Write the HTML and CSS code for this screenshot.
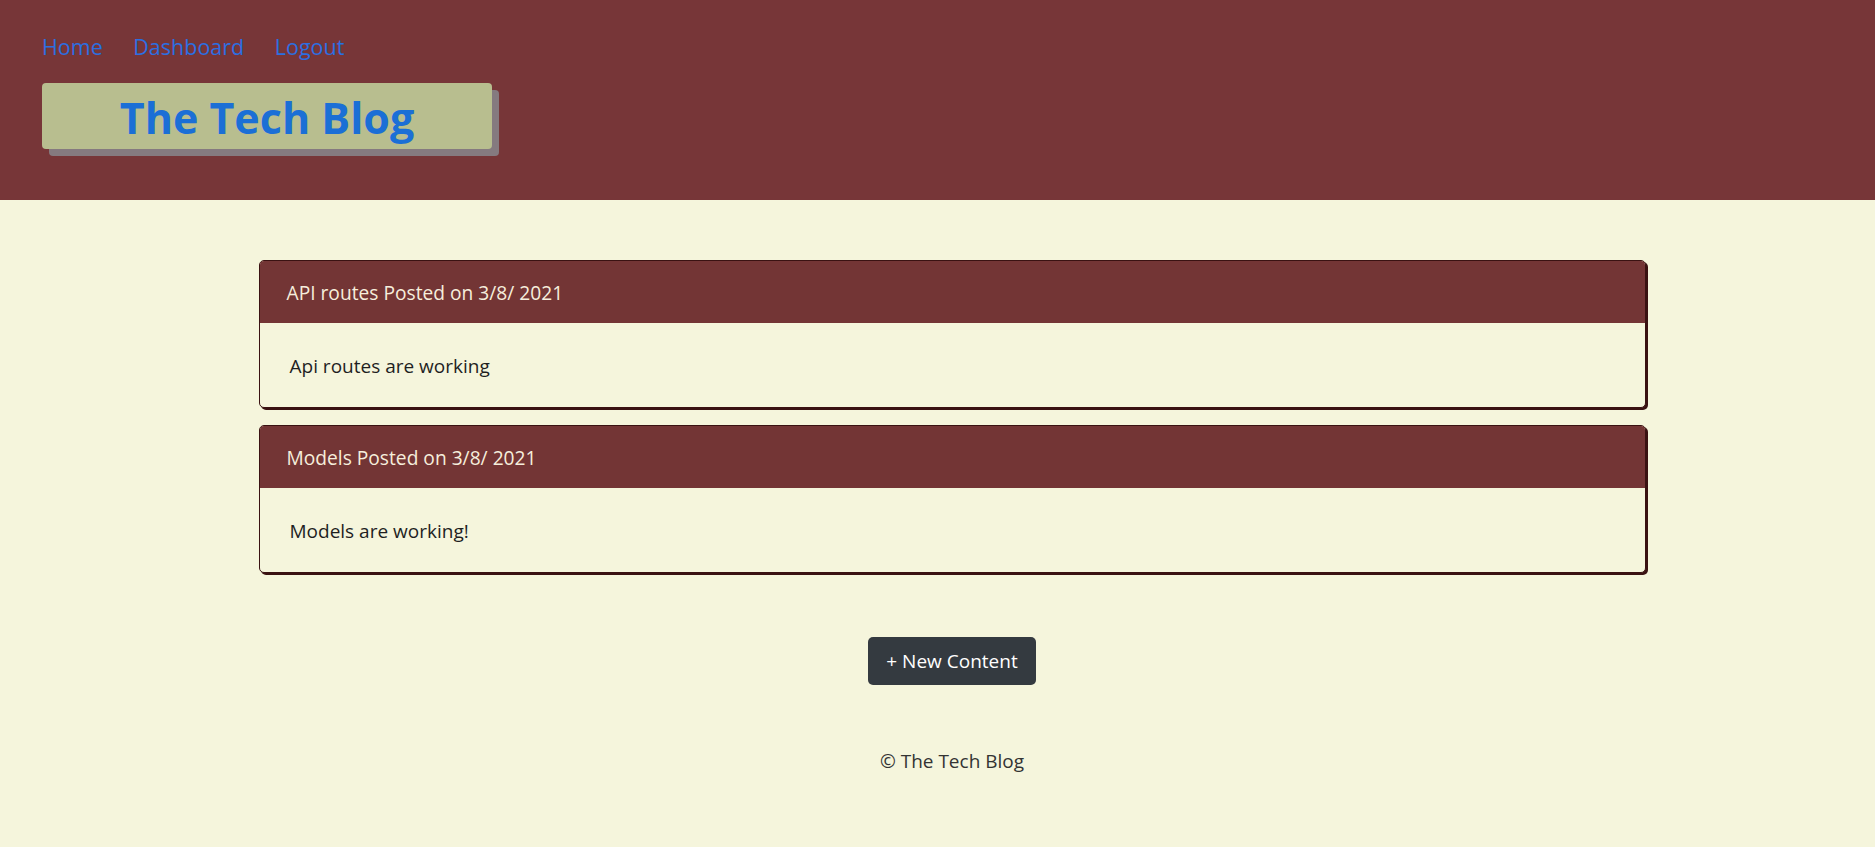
FILE: index.html
```html
<!DOCTYPE html>
<html lang="en">
<head>
<meta charset="utf-8">
<title>The Tech Blog</title>
<link rel="stylesheet" href="styles.css">
</head>
<body>
<header class="site-header">
  <nav class="nav">
    <a class="nav-link" href="#">Home</a>
    <a class="nav-link" href="#">Dashboard</a>
    <a class="nav-link" href="#">Logout</a>
  </nav>
  <div class="brand"><h1 class="brand-title">The Tech Blog</h1></div>
</header>
<main class="main">
  <div class="posts">
    <article class="card">
      <div class="card-header">API routes Posted on 3/8/ 2021</div>
      <div class="card-body">Api routes are working</div>
    </article>
    <article class="card">
      <div class="card-header">Models Posted on 3/8/ 2021</div>
      <div class="card-body">Models are working!</div>
    </article>
  </div>
  <div class="actions"><a class="btn" href="#">+ New Content</a></div>
  <footer class="footer">© The Tech Blog</footer>
</main>
</body>
</html>
```
FILE: styles.css
```css
* { box-sizing: border-box; }
html, body { margin: 0; padding: 0; }
body {
  background: #f5f5dc;
  font-family: "Open Sans", "Noto Sans", sans-serif;
  font-size: 19px;
  color: #212529;
  height: 847px;
  overflow: hidden;
}
.site-header {
  background: #773638;
  height: 200px;
  padding: 31px 0 0 42px;
}
.nav {
  display: flex;
  gap: 30.5px;
  line-height: 31.5px;
}
.nav-link {
  color: #2b6fe2;
  text-decoration: none;
  font-size: 21.5px;
}
.brand {
  margin-top: 20.5px;
  width: 450px;
  height: 66px;
  background: #b8be8f;
  border-radius: 4px;
  box-shadow: 7px 7px 0 #857a7f;
  padding-top: 4px;
  text-align: center;
}
.brand-title {
  margin: 0;
  font-size: 43px;
  font-weight: 700;
  line-height: 62px;
  color: #1b6fd6;
}
.main {
  padding: 60px 0 0 29px;
}
.posts {
  width: 1387px;
  margin: 0 auto;
  display: flex;
  flex-direction: column;
  gap: 17px;
}
.card {
  border: 1px solid #3a1212;
  border-radius: 5px;
  box-shadow: 2px 2px 0 #3a1212;
  overflow: hidden;
  background: #f5f5dc;
}
.card-header {
  background: #733535;
  color: #f6eedc;
  padding: 17.5px 27px 16px;
  line-height: 28.5px;
  font-size: 19.2px;
}
.card-body {
  padding: 29px 30px 26.5px;
  line-height: 28.5px;
  color: #1f1f1f;
}
.actions {
  display: flex;
  justify-content: center;
  margin-top: 64px;
}
.btn {
  display: inline-block;
  background: #343a40;
  color: #fff;
  text-decoration: none;
  line-height: 28.5px;
  padding: 9.75px 18.5px;
  border-radius: 5px;
}
.footer {
  margin-top: 61.5px;
  text-align: center;
  line-height: 28.5px;
  color: #333;
}
```
